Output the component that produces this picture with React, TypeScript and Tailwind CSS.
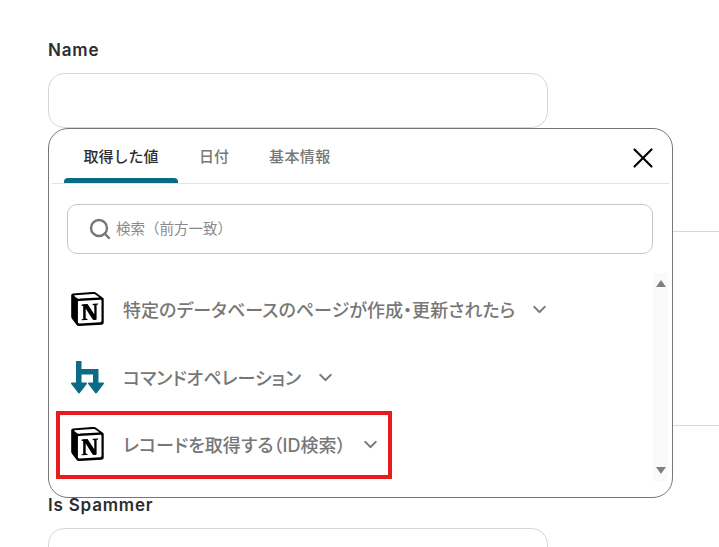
import { ChevronDown, Search, X } from 'lucide-react';

const FONT = "font-['Inter','Noto_Sans_CJK_JP',sans-serif]";

function NotionLogo() {
  return (
    <svg viewBox="0 0 96 100" className="h-[34px] w-[33px] shrink-0">
      <path
        fill="#fff"
        d="M6.017 4.313l55.333 -4.087c6.797 -0.583 8.543 -0.19 12.817 2.917l17.663 12.443c2.913 2.14 3.883 2.723 3.883 5.053v68.243c0 4.277 -1.553 6.807 -6.99 7.193L24.467 99.967c-4.08 0.193 -6.023 -0.39 -8.16 -3.113L3.3 79.94c-2.333 -3.113 -3.3 -5.443 -3.3 -8.167V11.113c0 -3.497 1.553 -6.413 6.017 -6.8z"
      />
      <path
        fill="#000"
        fillRule="evenodd"
        d="M61.35 0.227l-55.333 4.087C1.553 4.7 0 7.617 0 11.113v60.66c0 2.723 0.967 5.053 3.3 8.167l13.007 16.913c2.137 2.723 4.08 3.307 8.16 3.113l64.257 -3.89c5.433 -0.387 6.99 -2.917 6.99 -7.193V20.64c0 -2.21 -0.873 -2.847 -3.443 -4.733L74.167 3.143c-4.273 -3.107 -6.02 -3.5 -12.817 -2.917zM25.92 19.523c-5.247 0.353 -6.437 0.433 -9.417 -1.99L8.927 11.507c-0.77 -0.78 -0.383 -1.753 1.557 -1.947l53.193 -3.887c4.467 -0.39 6.793 1.167 8.54 2.527l9.123 6.61c0.39 0.197 1.36 1.36 0.193 1.36l-54.933 3.307 -0.68 0.047zM19.803 88.3V30.367c0 -2.53 0.777 -3.697 3.103 -3.893L86 22.78c2.14 -0.193 3.107 1.167 3.107 3.693v57.547c0 2.53 -0.39 4.67 -3.883 4.863l-60.377 3.5c-3.493 0.193 -5.043 -0.97 -5.043 -4.083zm59.6 -54.827c0.387 1.75 0 3.5 -1.75 3.7l-2.91 0.577v42.773c-2.527 1.36 -4.853 2.137 -6.797 2.137 -3.107 0 -3.883 -0.973 -6.21 -3.887l-19.03 -29.94v28.967l6.02 1.363s0 3.5 -4.857 3.5l-13.39 0.777c-0.39 -0.78 0 -2.723 1.357 -3.11l3.497 -0.97v-38.3L30.48 40.667c-0.39 -1.75 0.58 -4.277 3.3 -4.473l14.367 -0.967 19.8 30.327v-26.83l-5.047 -0.58c-0.39 -2.143 1.163 -3.7 3.103 -3.89l13.4 -0.78z"
      />
    </svg>
  );
}

function CommandLogo() {
  return (
    <svg viewBox="0 0 33 33" className="h-[33px] w-[33px] shrink-0" fill="#0b6a85">
      <path d="M5 0h5.500v8h17v15h-5.500v-9.500h-11.500v9.500h-5.500z" />
      <path d="M1 22.500h14l-7 9z" stroke="#0b6a85" strokeWidth="2" strokeLinejoin="round" />
      <path d="M18 22.500h14l-7 9z" stroke="#0b6a85" strokeWidth="2" strokeLinejoin="round" />
    </svg>
  );
}

function SourceRow({ logo, label, className }: { logo: React.ReactNode; label: string; className: string }) {
  return (
    <div className={`flex items-center ${className}`}>
      {logo}
      <span className="ml-[19px] pt-[2px] text-[18px] font-medium tracking-[0.05px] whitespace-nowrap text-[#777] [font-feature-settings:'palt']">
        {label}
      </span>
      <ChevronDown className="ml-[14px] text-[#777]" size={21} strokeWidth={2.4} />
    </div>
  );
}

function ValuePicker() {
  return (
    <div className="absolute top-[128px] left-[48px] h-[370px] w-[625px] rounded-[20px] border border-[#777] bg-white">
      {/* tabs */}
      <div className="relative mx-[3px] flex h-[55px] items-center border-b border-[#e3e3e3] pl-[12px] text-[15px] font-medium text-[#777]">
        <div className="relative flex h-[54px] w-[114px] items-center justify-center pt-[3px] text-[#2d2d2d]">
          取得した値
          <span className="absolute right-0 bottom-0 left-0 h-[5px] rounded-t-[4px] bg-[#0b6a85]" />
        </div>
        <span className="ml-[21px] pt-[3px]">日付</span>
        <span className="ml-[40px] pt-[3px] tracking-[0.4px]">基本情報</span>
        <X className="absolute top-[12px] right-[9px] text-black" size={34} strokeWidth={1.5} />
      </div>

      {/* search */}
      <div className="mt-[20px] mr-[19px] ml-[18px] flex h-[50px] items-center rounded-[10px] border border-[#c8c8c8] pl-[20px] text-[14.5px] text-[#8a8a8a]">
        <Search className="text-[#777]" size={24} strokeWidth={2.4} />
        <span className="ml-[4px]">検索（前方一致）</span>
      </div>

      {/* source list */}
      <div className="relative mt-[19px] h-[208px]">
        <div className="absolute top-0 right-[4px] flex h-[208px] w-[15px] flex-col items-center justify-between bg-[#fafafa] py-[7px]">
          <span className="h-0 w-0 border-x-[5px] border-b-[7px] border-x-transparent border-b-[#808080]" />
          <span className="h-0 w-0 border-x-[5px] border-t-[7px] border-x-transparent border-t-[#808080]" />
        </div>
        <div className="flex flex-col pl-[22px]">
          <SourceRow className="mt-[19px] h-[34px]" logo={<NotionLogo />} label="特定のデータベースのページが作成・更新されたら" />
          <SourceRow className="mt-[34px] h-[34px]" logo={<CommandLogo />} label="コマンドオペレーション" />
          <SourceRow className="mt-[33px] h-[34px]" logo={<NotionLogo />} label="レコードを取得する（ID検索）" />
        </div>
      </div>

      {/* annotation */}
      <div className="absolute top-[282px] left-[7px] h-[68px] w-[336px] border-[4px] border-[#e81c1c]" />
    </div>
  );
}

export default function App() {
  return (
    <div className={`relative h-[547px] w-[719px] overflow-hidden bg-white ${FONT}`}>
      <div className="pt-[40px] pl-[48px]">
        <label className="block text-[17px] leading-[20px] font-semibold tracking-[0.8px] text-[#2d2d2d]">Name</label>
        <div className="mt-[13px] h-[55px] w-[500px] rounded-[16px] border border-[#d5d7de]" />
        <div className="mt-[103px] border-t border-[#d8d8d8]" />
        <div className="mt-[193px] border-t border-[#d8d8d8]" />
        <label className="mt-[69px] block text-[17px] leading-[20px] font-semibold tracking-[0.8px] text-[#2d2d2d]">
          Is Spammer
        </label>
        <div className="mt-[13px] h-[55px] w-[500px] rounded-[16px] border border-[#d5d7de]" />
      </div>
      <ValuePicker />
    </div>
  );
}
